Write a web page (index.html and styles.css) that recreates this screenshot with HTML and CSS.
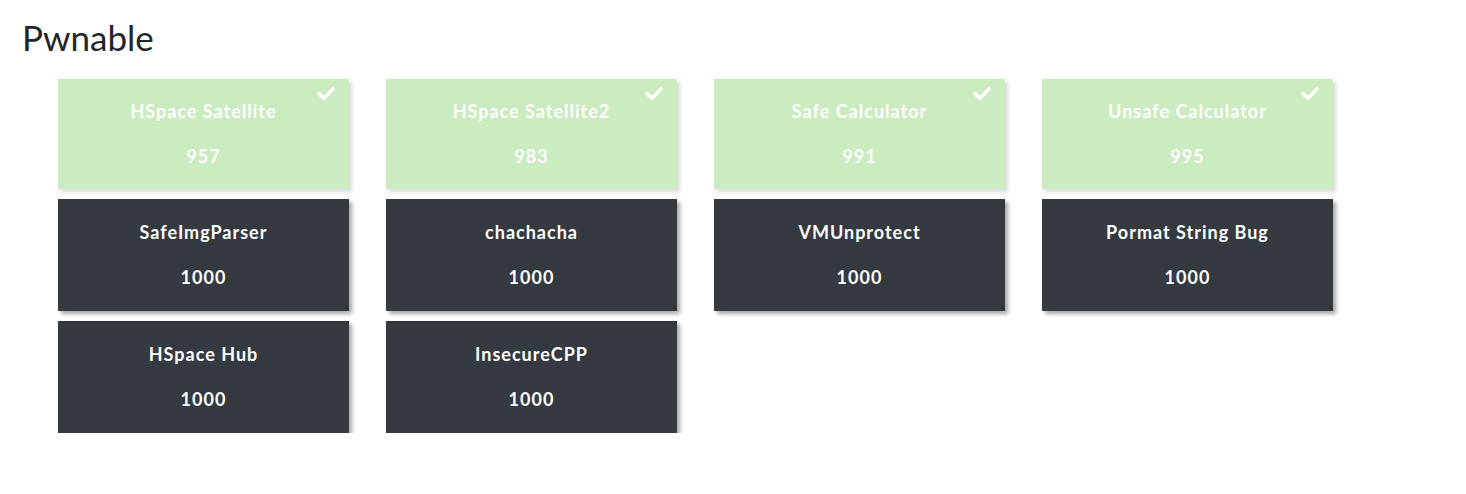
FILE: index.html
```html
<!DOCTYPE html>
<html>
<head>
<meta charset="utf-8">
<link rel="stylesheet" href="styles.css">
</head>
<body>
<h1 class="category">Pwnable</h1>
<div class="board">
  <div class="card solved">
    <svg class="check" viewBox="0 0 512 400"><path d="M173.898 375.404l-166.4-166.4c-9.997-9.997-9.997-26.206 0-36.204l36.203-36.204c9.997-9.998 26.207-9.998 36.204 0L192 248.69 432.095 8.596c9.997-9.997 26.207-9.997 36.204 0l36.203 36.204c9.997 9.997 9.997 26.206 0 36.204l-294.4 294.401c-9.998 9.997-26.207 9.997-36.204-.001z"/></svg>
    <div class="name">HSpace Satellite</div>
    <div class="points">957</div>
  </div>
  <div class="card solved">
    <svg class="check" viewBox="0 0 512 400"><path d="M173.898 375.404l-166.4-166.4c-9.997-9.997-9.997-26.206 0-36.204l36.203-36.204c9.997-9.998 26.207-9.998 36.204 0L192 248.69 432.095 8.596c9.997-9.997 26.207-9.997 36.204 0l36.203 36.204c9.997 9.997 9.997 26.206 0 36.204l-294.4 294.401c-9.998 9.997-26.207 9.997-36.204-.001z"/></svg>
    <div class="name">HSpace Satellite2</div>
    <div class="points">983</div>
  </div>
  <div class="card solved">
    <svg class="check" viewBox="0 0 512 400"><path d="M173.898 375.404l-166.4-166.4c-9.997-9.997-9.997-26.206 0-36.204l36.203-36.204c9.997-9.998 26.207-9.998 36.204 0L192 248.69 432.095 8.596c9.997-9.997 26.207-9.997 36.204 0l36.203 36.204c9.997 9.997 9.997 26.206 0 36.204l-294.4 294.401c-9.998 9.997-26.207 9.997-36.204-.001z"/></svg>
    <div class="name">Safe Calculator</div>
    <div class="points">991</div>
  </div>
  <div class="card solved">
    <svg class="check" viewBox="0 0 512 400"><path d="M173.898 375.404l-166.4-166.4c-9.997-9.997-9.997-26.206 0-36.204l36.203-36.204c9.997-9.998 26.207-9.998 36.204 0L192 248.69 432.095 8.596c9.997-9.997 26.207-9.997 36.204 0l36.203 36.204c9.997 9.997 9.997 26.206 0 36.204l-294.4 294.401c-9.998 9.997-26.207 9.997-36.204-.001z"/></svg>
    <div class="name">Unsafe Calculator</div>
    <div class="points">995</div>
  </div>
  <div class="card">
    <div class="name">SafeImgParser</div>
    <div class="points">1000</div>
  </div>
  <div class="card">
    <div class="name">chachacha</div>
    <div class="points">1000</div>
  </div>
  <div class="card">
    <div class="name">VMUnprotect</div>
    <div class="points">1000</div>
  </div>
  <div class="card">
    <div class="name">Pormat String Bug</div>
    <div class="points">1000</div>
  </div>
  <div class="card">
    <div class="name">HSpace Hub</div>
    <div class="points">1000</div>
  </div>
  <div class="card">
    <div class="name">InsecureCPP</div>
    <div class="points">1000</div>
  </div>
</div>
</body>
</html>
```
FILE: styles.css
```css
html, body {
  margin: 0;
  padding: 0;
  background: #ffffff;
  font-family: Lato, "Noto Sans", sans-serif;
}

.category {
  margin: 16px 0 0 22px;
  font-size: 35px;
  font-weight: 400;
  line-height: 43px;
  color: #212529;
}

.board {
  display: grid;
  grid-template-columns: repeat(4, 291px);
  column-gap: 37px;
  row-gap: 10px;
  padding: 20px 0 0 58px;
}

.card {
  position: relative;
  height: 112px;
  box-sizing: border-box;
  padding-top: 21px;
  background: #343a40;
  color: #ffffff;
  text-align: center;
  font-weight: 700;
  font-size: 18px;
  line-height: 24px;
  letter-spacing: 1px;
  box-shadow: 3px 3px 4px rgba(0, 0, 0, 0.35);
}

.card.solved {
  height: 110px;
  padding-top: 20px;
  background: #cbebc0;
  box-shadow: 3px 3px 4px rgba(0, 0, 0, 0.15);
}

.points {
  margin-top: 21px;
}

.check {
  position: absolute;
  top: 8px;
  right: 14px;
  width: 18px;
  height: 14px;
  fill: #ffffff;
}
```
